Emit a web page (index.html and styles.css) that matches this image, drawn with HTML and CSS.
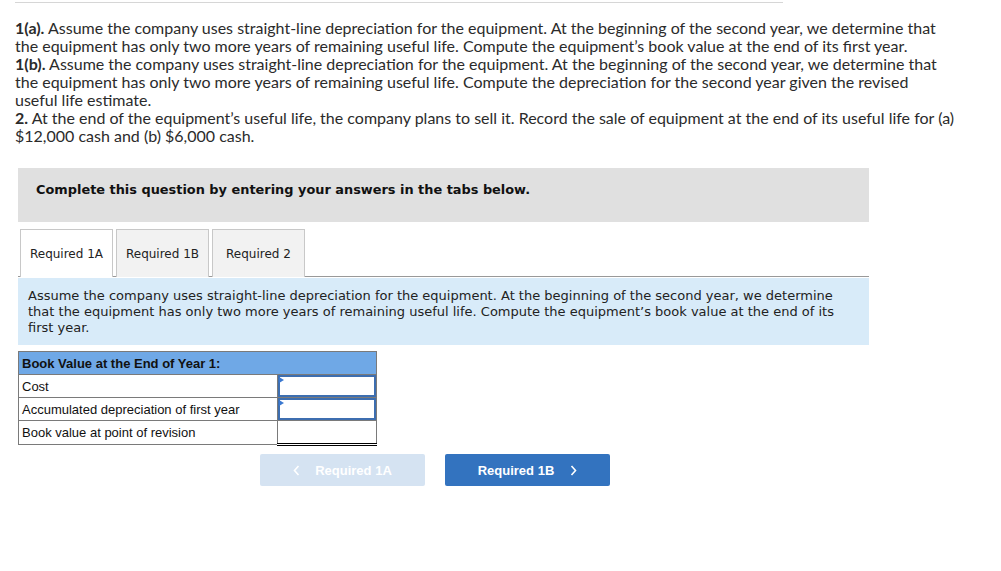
FILE: index.html
```html
<!DOCTYPE html>
<html>
<head>
<meta charset="utf-8">
<link rel="stylesheet" href="styles.css">
</head>
<body>
<div class="rule"></div>
<div class="problem">
  <p><b>1(a).</b> Assume the company uses straight-line depreciation for the equipment. At the beginning of the second year, we determine that the equipment has only two more years of remaining useful life. Compute the equipment’s book value at the end of its first year.</p>
  <p><b>1(b).</b> Assume the company uses straight-line depreciation for the equipment. At the beginning of the second year, we determine that the equipment has only two more years of remaining useful life. Compute the depreciation for the second year given the revised<br>useful life estimate.</p>
  <p><b>2.</b> At the end of the equipment’s useful life, the company plans to sell it. Record the sale of equipment at the end of its useful life for (a) $12,000 cash and (b) $6,000 cash.</p>
</div>

<div class="widget">
  <div class="banner">Complete this question by entering your answers in the tabs below.</div>

  <div class="tabs">
    <div class="tab active">Required 1A</div>
    <div class="tab">Required 1B</div>
    <div class="tab">Required 2</div>
  </div>

  <div class="info">Assume the company uses straight-line depreciation for the equipment. At the beginning of the second year, we determine that the equipment has only two more years of remaining useful life. Compute the equipment’s book value at the end of its first year.</div>

  <table class="grid">
    <tr class="head"><td colspan="2">Book Value at the End of Year 1:</td></tr>
    <tr><td class="label">Cost</td><td class="input"><span class="flag"></span></td></tr>
    <tr><td class="label">Accumulated depreciation of first year</td><td class="input"><span class="flag"></span></td></tr>
    <tr><td class="label">Book value at point of revision</td><td class="total"></td></tr>
  </table>

  <div class="nav">
    <div class="btn prev"><svg class="chev" width="7" height="11" viewBox="0 0 7 11"><polyline points="5.5,1 1.5,5.5 5.5,10" fill="none" stroke="currentColor" stroke-width="1.6"/></svg>Required 1A</div>
    <div class="btn next">Required 1B<svg class="chev" width="7" height="11" viewBox="0 0 7 11"><polyline points="1.5,1 5.5,5.5 1.5,10" fill="none" stroke="currentColor" stroke-width="1.6"/></svg></div>
  </div>
</div>
</body>
</html>
```

FILE: styles.css
```css
html, body {
  margin: 0;
  padding: 0;
  background: #fff;
}
body {
  padding: 2px 0 0 15px;
  color: #333;
}
.rule {
  width: 768px;
  height: 1px;
  background: #d6d6d6;
}
.problem {
  font-family: Lato, "Open Sans", sans-serif;
  font-size: 16px;
  line-height: 18px;
  color: #2b2b2b;
  margin-top: 16px;
  width: 942px;
}
.problem p {
  margin: 0;
}
.problem b {
  font-weight: 700;
}
.widget {
  margin-left: 3px;
  width: 851px;
  margin-top: 23px;
}
.banner {
  background: #e0e0e0;
  height: 54px;
  box-sizing: border-box;
  padding: 13px 18px 0 18px;
  font-family: "DejaVu Sans", Verdana, sans-serif;
  font-weight: bold;
  font-size: 12.9px;
  line-height: 18px;
  color: #111;
}
.tabs {
  display: flex;
  gap: 3px;
  margin-top: 7px;
  padding-left: 2px;
  border-bottom: 1px solid #999;
  height: 47px;
}
.tab {
  width: 93px;
  box-sizing: border-box;
  height: 48px;
  border: 1px solid #c8c8c8;
  border-bottom: none;
  background: #f2f2f2;
  display: flex;
  align-items: center;
  justify-content: center;
  font-family: "DejaVu Sans", Verdana, sans-serif;
  font-size: 12px;
  color: #222;
}
.tab.active {
  background: #fff;
  position: relative;
  z-index: 1;
}
.info {
  margin-top: 1px;
  background: #d8ebf9;
  padding: 10px 20px 9px 10px;
  font-family: "DejaVu Sans", Verdana, sans-serif;
  font-size: 13px;
  line-height: 16px;
  color: #222;
}
.grid {
  margin-top: 6px;
  border-collapse: collapse;
  width: 359px;
  font-family: "Liberation Sans", Arial, sans-serif;
  font-size: 13px;
  color: #111;
}
.grid td {
  border: 1px solid #7a7a7a;
  height: 22px;
  padding: 0 0 0 3px;
}
.grid .head td {
  background: #6fa8e6;
  font-weight: bold;
}
.grid .label {
  width: 255px;
}
.grid .input {
  position: relative;
  padding: 0;
  box-shadow: inset 0 0 0 2px #3d6eb0;
}
.grid .total {
  border-bottom: 3px double #000;
  border-top: 1px solid #000;
}
.flag {
  position: absolute;
  left: 1px;
  top: 2px;
  width: 0;
  height: 0;
  border-left: 5px solid #3a78d0;
  border-top: 3px solid transparent;
  border-bottom: 3px solid transparent;
}
.nav {
  display: flex;
  gap: 20px;
  margin-top: 8px;
  margin-left: 242px;
}
.btn {
  width: 165px;
  height: 32px;
  border-radius: 2px;
  display: flex;
  align-items: center;
  justify-content: center;
  font-family: "Liberation Sans", Arial, sans-serif;
  font-weight: bold;
  font-size: 13px;
  color: #fff;
}
.btn.prev {
  background: #d5e3f2;
}
.btn.next {
  background: #3373bf;
}
.chev {
  display: block;
}
.prev .chev {
  margin-right: 15px;
}
.next .chev {
  margin-left: 16px;
}
```
